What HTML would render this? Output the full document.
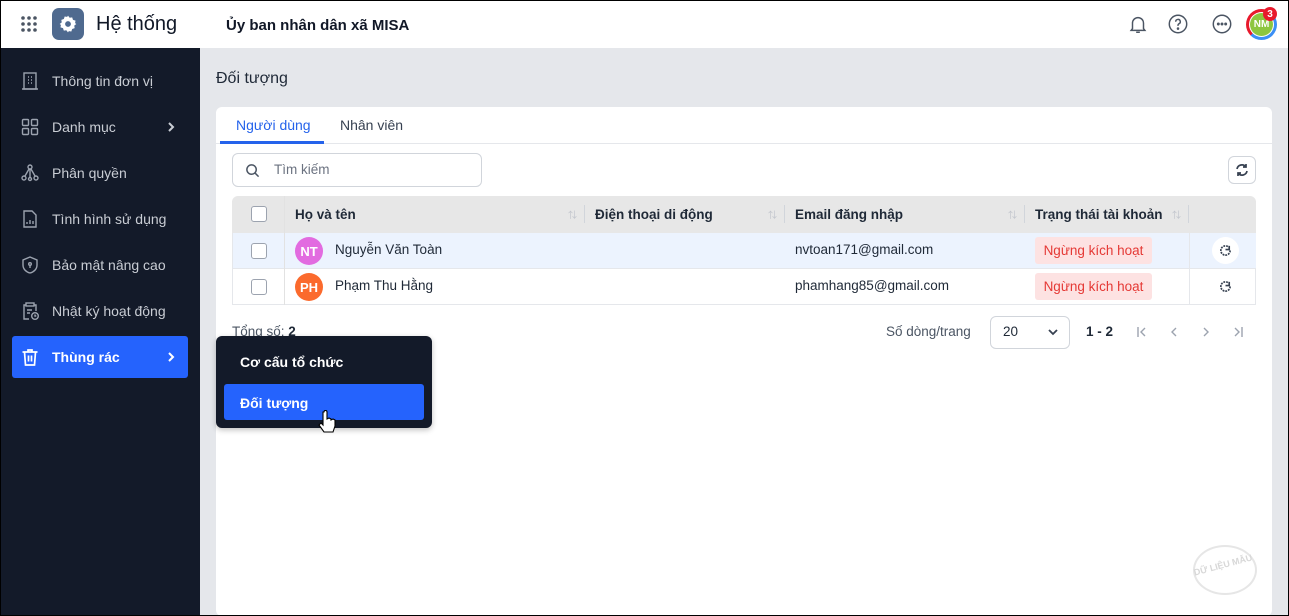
<!DOCTYPE html>
<html><head><meta charset="utf-8"><style>
*{box-sizing:border-box;margin:0;padding:0}
body{width:1289px;height:616px;overflow:hidden;font-family:"Liberation Sans","Noto Sans CJK SC",sans-serif;background:#e5e7eb;position:relative;color:#1f2937}
.a{position:absolute}
.hdr{left:0;top:0;width:1289px;height:48px;background:#fff;border:1px solid #000;border-bottom:none}
.side{left:0;top:48px;width:200px;height:568px;background:#131a29;border-left:1px solid #000}
.mi{position:absolute;left:20px;font-size:14px;color:#c9cdd4;display:flex;align-items:center;gap:12px}
.mi svg{width:20px;height:20px}
.card{left:216px;top:107px;width:1056px;height:509px;background:#fff;border-radius:6px}
.th{font-size:13.5px;font-weight:bold;color:#1f2937;top:207px}
.td{font-size:13.5px;color:#1f2937}
.cb{width:16px;height:16px;border:1px solid #9ca3af;border-radius:3px;background:#fff;left:251px}
.av{width:28px;height:28px;border-radius:50%;color:#fff;font-weight:bold;font-size:13px;display:flex;align-items:center;justify-content:center;left:295px}
.tag{background:#fde2e2;color:#e53935;font-size:13.5px;border-radius:3px;width:117px;height:27px;left:1035px;display:flex;align-items:center;justify-content:center}
.sep{width:1px;height:18px;background:#d1d5db;top:205px}
.srt{font-size:9px;color:#c0c4cc;top:208px}
.pg{width:12px;height:12px;top:326px}
</style></head><body>
<div class="a hdr"></div>
<svg class="a" style="left:20px;top:15px" width="18" height="18" viewBox="0 0 18 18" fill="#4b5563"><circle cx="3" cy="3" r="1.8"/><circle cx="9" cy="3" r="1.8"/><circle cx="15" cy="3" r="1.8"/><circle cx="3" cy="9" r="1.8"/><circle cx="9" cy="9" r="1.8"/><circle cx="15" cy="9" r="1.8"/><circle cx="3" cy="15" r="1.8"/><circle cx="9" cy="15" r="1.8"/><circle cx="15" cy="15" r="1.8"/></svg>
<div class="a" style="left:52px;top:8px;width:32px;height:32px;border-radius:7px;background:#4f6a8f"></div>
<svg class="a" style="left:58px;top:14px" width="20" height="20" viewBox="0 0 24 24"><path fill="#fff" d="M12 2l2 2.5 3-.5 1 3 3 1-.5 3L22 12l-2.5 2 .5 3-3 1-1 3-3-.5L12 22l-2-2.5-3 .5-1-3-3-1 .5-3L2 12l2.5-2-.5-3 3-1 1-3 3 .5z"/><circle cx="12" cy="12" r="3.5" fill="#4f6a8f"/></svg>
<div class="a" style="left:96px;top:13px;font-size:20px;color:#111827">Hệ thống</div>
<div class="a" style="left:226px;top:17px;font-size:15px;font-weight:bold;color:#111827">Ủy ban nhân dân xã MISA</div>
<svg class="a" style="left:1127px;top:13px" width="22" height="22" viewBox="0 0 24 24" fill="none" stroke="#4b5563" stroke-width="1.6"><path d="M6 17V11a6 6 0 0 1 12 0v6l1.5 2h-15z"/><path d="M10 21h4"/></svg>
<svg class="a" style="left:1167px;top:13px" width="22" height="22" viewBox="0 0 24 24" fill="none" stroke="#4b5563" stroke-width="1.6"><circle cx="12" cy="12" r="9.5"/><path d="M9.5 9.5a2.5 2.5 0 1 1 3.5 2.3c-.7.4-1 .9-1 1.7v.5"/><circle cx="12" cy="17" r=".6" fill="#4b5563"/></svg>
<svg class="a" style="left:1211px;top:13px" width="22" height="22" viewBox="0 0 24 24" fill="none" stroke="#4b5563" stroke-width="1.6"><circle cx="12" cy="12" r="9.5"/><circle cx="8" cy="12" r=".8" fill="#4b5563"/><circle cx="12" cy="12" r=".8" fill="#4b5563"/><circle cx="16" cy="12" r=".8" fill="#4b5563"/></svg>
<div class="a" style="left:1246px;top:9px;width:31px;height:31px;border-radius:50%;border:3px solid #3b8ff5;border-left-color:#e8192c;border-top-color:#e8192c"></div>
<div class="a" style="left:1250px;top:13px;width:23px;height:23px;border-radius:50%;background:#8dc63f;color:#fff;font-size:10px;font-weight:bold;display:flex;align-items:center;justify-content:center">NM</div>
<div class="a" style="left:1263px;top:7px;width:14px;height:14px;border-radius:50%;background:#e8192c;color:#fff;font-size:10px;font-weight:bold;display:flex;align-items:center;justify-content:center">3</div>

<div class="a side"></div>
<div class="mi" style="top:71px"><svg viewBox="0 0 20 20" fill="none" stroke="#9ca3af" stroke-width="1.4"><rect x="4" y="2" width="12" height="16"/><path d="M2 18h16M8 6h1M11 6h1M8 9h1M11 9h1M8 12h1M11 12h1"/></svg>Thông tin đơn vị</div>
<div class="mi" style="top:117px"><svg viewBox="0 0 20 20" fill="none" stroke="#9ca3af" stroke-width="1.4"><rect x="2.5" y="2.5" width="6" height="6" rx="1"/><rect x="11.5" y="2.5" width="6" height="6" rx="1"/><rect x="2.5" y="11.5" width="6" height="6" rx="1"/><rect x="11.5" y="11.5" width="6" height="6" rx="1"/></svg>Danh mục</div>
<svg class="a" style="left:167px;top:122px" width="8" height="10" viewBox="0 0 8 10" fill="none" stroke="#c9cdd4" stroke-width="2"><path d="M2 1l4 4-4 4"/></svg>
<div class="mi" style="top:163px"><svg viewBox="0 0 20 20" fill="none" stroke="#9ca3af" stroke-width="1.4"><circle cx="10" cy="4" r="2"/><circle cx="4" cy="15" r="2"/><circle cx="16" cy="15" r="2"/><circle cx="10" cy="16" r="1.5"/><path d="M10 6v8.5M9 6l-4 7M11 6l4 7"/></svg>Phân quyền</div>
<div class="mi" style="top:209px"><svg viewBox="0 0 20 20" fill="none" stroke="#9ca3af" stroke-width="1.4"><path d="M4 2h8l4 4v12H4z"/><path d="M7 15v-2M10 15v-4M13 15v-3"/></svg>Tình hình sử dụng</div>
<div class="mi" style="top:255px"><svg viewBox="0 0 20 20" fill="none" stroke="#9ca3af" stroke-width="1.4"><path d="M10 2l7 3v5c0 4-3 7-7 8-4-1-7-4-7-8V5z"/><circle cx="10" cy="9" r="1.3"/><path d="M10 10v3"/></svg>Bảo mật nâng cao</div>
<div class="mi" style="top:301px"><svg viewBox="0 0 20 20" fill="none" stroke="#9ca3af" stroke-width="1.4"><path d="M9 18H4V4h2M14 4h2v6"/><rect x="6" y="2" width="8" height="3"/><path d="M7 9h5M7 12h3"/><circle cx="15" cy="15" r="3.3"/><path d="M15 13.5V15h1.3"/></svg>Nhật ký hoạt động</div>
<div class="a" style="left:12px;top:336px;width:176px;height:42px;background:#2563fd;border-radius:3px"></div>
<div class="mi" style="top:347px;color:#fff;font-weight:bold"><svg viewBox="0 0 20 20" fill="none" stroke="#fff" stroke-width="1.7"><path d="M2.5 5h15M8 5V3h4v2M4.5 5l1 13h9l1-13M8.5 8.5v6M11.5 8.5v6"/></svg>Thùng rác</div>
<svg class="a" style="left:167px;top:352px" width="8" height="10" viewBox="0 0 8 10" fill="none" stroke="#fff" stroke-width="2"><path d="M2 1l4 4-4 4"/></svg>

<div class="a" style="left:216px;top:70px;font-size:16px;color:#1f2937">Đối tượng</div>
<div class="a card"></div>
<div class="a" style="left:236px;top:117px;font-size:14px;color:#2563eb">Người dùng</div>
<div class="a" style="left:340px;top:117px;font-size:14px;color:#374151">Nhân viên</div>
<div class="a" style="left:216px;top:143px;width:1056px;height:1px;background:#e5e7eb"></div>
<div class="a" style="left:220px;top:141px;width:104px;height:3px;background:#2563eb"></div>
<div class="a" style="left:232px;top:153px;width:250px;height:34px;border:1px solid #d1d5db;border-radius:6px"></div>
<svg class="a" style="left:245px;top:163px" width="15" height="15" viewBox="0 0 16 16" fill="none" stroke="#4b5563" stroke-width="1.6"><circle cx="7" cy="7" r="5"/><path d="M11 11l3.5 3.5"/></svg>
<div class="a" style="left:274px;top:162px;font-size:13.5px;color:#6b7280">Tìm kiếm</div>
<div class="a" style="left:1228px;top:156px;width:28px;height:28px;border:1px solid #d1d5db;border-radius:6px"></div>
<svg class="a" style="left:1234px;top:162px" width="16" height="16" viewBox="0 0 16 16" fill="none" stroke="#374151" stroke-width="1.7"><path d="M3 7a5 5 0 0 1 9-2M13 9a5 5 0 0 1-9 2"/><path d="M12 2v3H9M4 14v-3h3"/></svg>

<div class="a" style="left:232px;top:196px;width:1024px;height:37px;background:#e7e7e7;border-radius:6px 6px 0 0"></div>
<div class="a" style="left:232px;top:233px;width:1024px;height:35px;background:#ecf3fe;border-left:1px solid #e5e7eb"></div>
<div class="a" style="left:232px;top:268px;width:1024px;height:1px;background:#e5e7eb"></div>
<div class="a" style="left:232px;top:269px;width:1024px;height:36px;border:1px solid #e5e7eb;border-top:none"></div>
<div class="a" style="left:284px;top:196px;width:1px;height:109px;background:#e2e2e2"></div>
<div class="a" style="left:1189px;top:233px;width:1px;height:72px;background:#e5e7eb"></div>
<div class="a cb" style="top:206px"></div><div class="a cb" style="top:243px"></div><div class="a cb" style="top:279px"></div>
<div class="a th" style="left:295px">Họ và tên</div>
<div class="a srt" style="left:568px">⇅</div><div class="a sep" style="left:584px"></div>
<div class="a th" style="left:595px">Điện thoại di động</div>
<div class="a srt" style="left:768px">⇅</div><div class="a sep" style="left:784px"></div>
<div class="a th" style="left:795px">Email đăng nhập</div>
<div class="a srt" style="left:1008px">⇅</div><div class="a sep" style="left:1024px"></div>
<div class="a th" style="left:1035px">Trạng thái tài khoản</div>
<div class="a srt" style="left:1172px">⇅</div><div class="a sep" style="left:1188px"></div>
<div class="a av" style="top:237px;background:#e26be0">NT</div>
<div class="a td" style="left:335px;top:242px">Nguyễn Văn Toàn</div>
<div class="a av" style="top:273px;background:#fb6a2d">PH</div>
<div class="a td" style="left:335px;top:278px">Phạm Thu Hằng</div>
<div class="a td" style="left:795px;top:242px">nvtoan171@gmail.com</div>
<div class="a td" style="left:795px;top:278px">phamhang85@gmail.com</div>
<div class="a tag" style="top:237px">Ngừng kích hoạt</div>
<div class="a tag" style="top:273px">Ngừng kích hoạt</div>
<div class="a" style="left:1212px;top:237px;width:27px;height:27px;border-radius:50%;background:#fff"></div>
<svg class="a" style="left:1219px;top:244px" width="13" height="13" viewBox="0 0 14 14" fill="none" stroke="#374151" stroke-width="1.8" stroke-dasharray="2 1"><path d="M12 7a5 5 0 1 1-2-4"/><path d="M11 2v4H7" stroke-dasharray="none"/></svg>
<svg class="a" style="left:1219px;top:280px" width="13" height="13" viewBox="0 0 14 14" fill="none" stroke="#374151" stroke-width="1.8" stroke-dasharray="2 1"><path d="M12 7a5 5 0 1 1-2-4"/><path d="M11 2v4H7" stroke-dasharray="none"/></svg>

<div class="a" style="left:232px;top:324px;font-size:13.5px;color:#4b5563">Tổng số: <b style="color:#1f2937">2</b></div>
<div class="a" style="left:886px;top:324px;font-size:13.5px;color:#4b5563">Số dòng/trang</div>
<div class="a" style="left:990px;top:316px;width:80px;height:33px;border:1px solid #d1d5db;border-radius:6px"></div>
<div class="a" style="left:1003px;top:324px;font-size:13.5px;color:#1f2937">20</div>
<svg class="a" style="left:1047px;top:327px" width="12" height="10" viewBox="0 0 12 10" fill="none" stroke="#374151" stroke-width="1.8"><path d="M2 3l4 4 4-4"/></svg>
<div class="a" style="left:1086px;top:324px;font-size:13.5px;font-weight:bold;color:#1f2937">1 - 2</div>
<svg class="a pg" style="left:1136px" viewBox="0 0 12 12" fill="none" stroke="#9ca3af" stroke-width="1.4"><path d="M2 1v10M9 2L5 6l4 4"/></svg>
<svg class="a pg" style="left:1168px" viewBox="0 0 12 12" fill="none" stroke="#9ca3af" stroke-width="1.4"><path d="M8 2L4 6l4 4"/></svg>
<svg class="a pg" style="left:1200px" viewBox="0 0 12 12" fill="none" stroke="#9ca3af" stroke-width="1.4"><path d="M4 2l4 4-4 4"/></svg>
<svg class="a pg" style="left:1232px" viewBox="0 0 12 12" fill="none" stroke="#9ca3af" stroke-width="1.4"><path d="M3 2l4 4-4 4M10 1v10"/></svg>

<div class="a" style="left:216px;top:336px;width:216px;height:92px;background:#131a29;border-radius:6px;box-shadow:0 2px 6px rgba(0,0,0,.25)"></div>
<div class="a" style="left:240px;top:354px;font-size:14px;color:#fff;font-weight:bold">Cơ cấu tổ chức</div>
<div class="a" style="left:224px;top:384px;width:200px;height:36px;background:#2563fd;border-radius:3px"></div>
<div class="a" style="left:240px;top:395px;font-size:14px;color:#fff;font-weight:bold">Đối tượng</div>
<svg class="a" style="left:318px;top:410px" width="20" height="26" viewBox="0 0 20 26"><path d="M5 2v13l-2-2-2 2 5 7h9l2-6v-6l-2-1-2 1v-1l-2-1-2 1V2a1.5 1.5 0 0 0-3 0z" fill="#fff" stroke="#000" stroke-width="1.1"/></svg>
<div class="a" style="left:1193px;top:545px;width:64px;height:50px;border-radius:50%;border:2px solid #e3e3e3;opacity:.9"></div>
<div class="a" style="left:1193px;top:560px;font-size:9px;font-weight:bold;color:#d8d8d8;transform:rotate(-15deg)">DỮ LIỆU MẪU</div>
<div class="a" style="left:1288px;top:0;width:1px;height:616px;background:#000"></div>
<div class="a" style="left:0;top:615px;width:1289px;height:1px;background:#000"></div>
</body></html>
